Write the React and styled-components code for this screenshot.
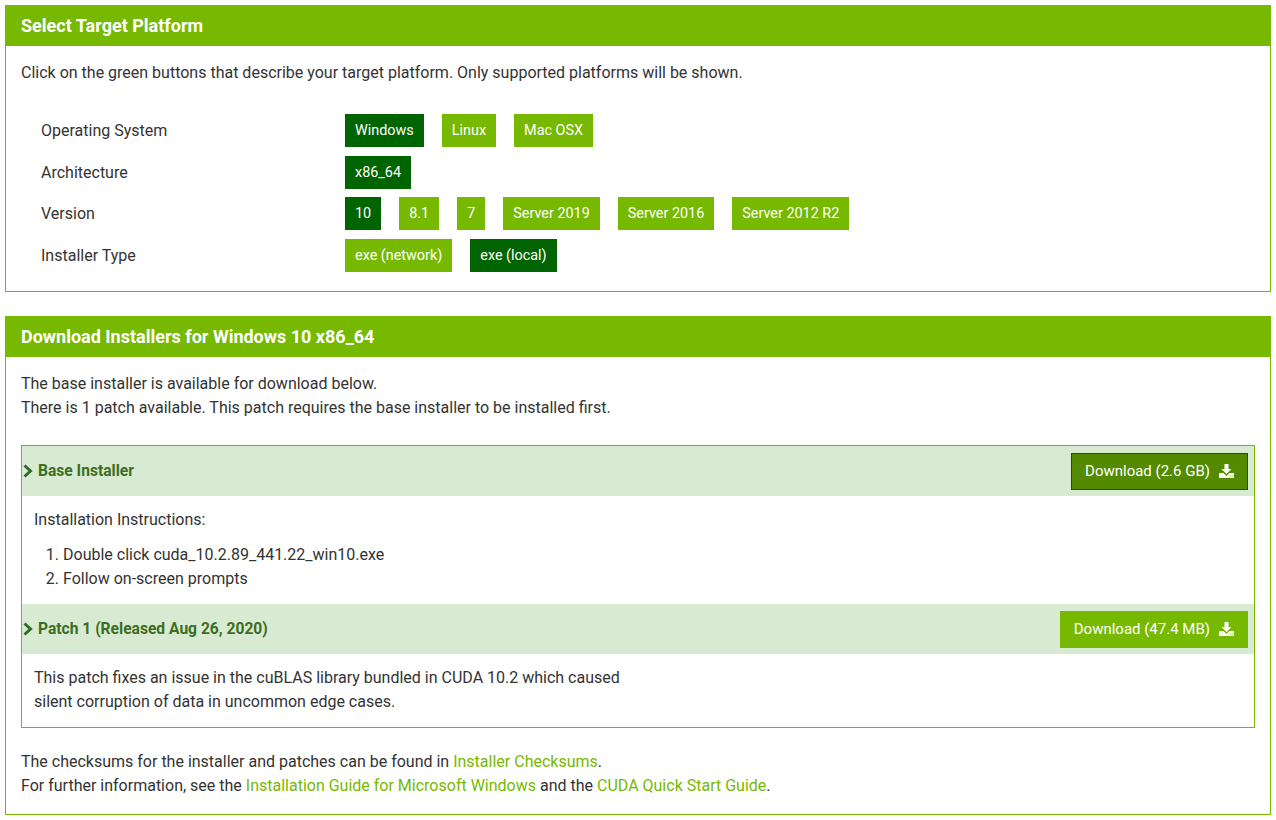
import React from 'react';
import styled, { createGlobalStyle } from 'styled-components';

const GlobalStyle = createGlobalStyle`
  body {
    margin: 0;
    padding: 5px;
    background: #fff;
    font-family: Roboto, "Liberation Sans", sans-serif;
    color: #333;
    font-size: 16px;
  }
`;

const GREEN = '#76b900';
const DARK = '#006400';

const platformRows = [
    {label: 'Operating System', options: ['Windows', 'Linux', 'Mac OSX'], active: 'Windows'},
    {label: 'Architecture', options: ['x86_64'], active: 'x86_64'},
    {label: 'Version', options: ['10', '8.1', '7', 'Server 2019', 'Server 2016', 'Server 2012 R2'], active: '10'},
    {label: 'Installer Type', options: ['exe (network)', 'exe (local)'], active: 'exe (local)'},
];

function DownloadIcon() {
    return (
        <svg width="15" height="14" viewBox="0 0 15 14">
            <path d="M5.5 0h4v5h3l-5 5-5-5h3z" fill="currentColor"/>
            <path d="M0 9h4.5l3 3 3-3H15v5H0z" fill="currentColor"/>
            <rect x="11" y="11.6" width="1" height="1" fill={GREEN}/>
            <rect x="12.8" y="11.6" width="1" height="1" fill={GREEN}/>
        </svg>
    );
}

function Chevron() {
    return (
        <svg width="10" height="14" viewBox="0 0 10 14">
            <path d="M1.5 1.5l6 5.5-6 5.5" fill="none" stroke="currentColor" strokeWidth="3"/>
        </svg>
    );
}

function App() {
    return (
        <Page>
            <GlobalStyle/>
            <Panel>
                <PanelHeader>Select Target Platform</PanelHeader>
                <PanelBody>
                    <Intro>Click on the green buttons that describe your target platform. Only supported platforms will be shown.</Intro>
                    <SelectGrid>
                        {platformRows.map(row => (
                            <React.Fragment key={row.label}>
                                <RowLabel>{row.label}</RowLabel>
                                <Options>
                                    {row.options.map(o => (
                                        <OptionButton key={o} $active={o === row.active}>{o}</OptionButton>
                                    ))}
                                </Options>
                            </React.Fragment>
                        ))}
                    </SelectGrid>
                </PanelBody>
            </Panel>

            <Panel>
                <PanelHeader>Download Installers for Windows 10 x86_64</PanelHeader>
                <PanelBody>
                    <Lines>
                        <div>The base installer is available for download below.</div>
                        <div>There is 1 patch available. This patch requires the base installer to be installed first.</div>
                    </Lines>
                    <InstallerBox>
                        <InstallerHead>
                            <InstallerTitle><Chevron/>Base Installer</InstallerTitle>
                            <DownloadButton $dark>Download (2.6 GB) <DownloadIcon/></DownloadButton>
                        </InstallerHead>
                        <InstallerBody>
                            <div>Installation Instructions:</div>
                            <Steps>
                                <li>Double click cuda_10.2.89_441.22_win10.exe</li>
                                <li>Follow on-screen prompts</li>
                            </Steps>
                        </InstallerBody>
                        <InstallerHead>
                            <InstallerTitle><Chevron/>Patch 1 (Released Aug 26, 2020)</InstallerTitle>
                            <DownloadButton>Download (47.4 MB) <DownloadIcon/></DownloadButton>
                        </InstallerHead>
                        <InstallerBody>
                            <Lines>
                                <div>This patch fixes an issue in the cuBLAS library bundled in CUDA 10.2 which caused</div>
                                <div>silent corruption of data in uncommon edge cases.</div>
                            </Lines>
                        </InstallerBody>
                    </InstallerBox>
                    <Footer>
                        <div>The checksums for the installer and patches can be found in <Link>Installer Checksums</Link>.</div>
                        <div>For further information, see the <Link>Installation Guide for Microsoft Windows</Link> and the <Link>CUDA Quick Start Guide</Link>.</div>
                    </Footer>
                </PanelBody>
            </Panel>
        </Page>
    );
}

const Page = styled.div`
  display: flex;
  flex-direction: column;
  gap: 24px;
  width: 1266px;
`;

const Panel = styled.section`
  border: 1px solid ${GREEN};
`;

const PanelHeader = styled.h2`
  margin: -1px -1px 0;
  background: ${GREEN};
  color: #fff;
  font-size: 18px;
  font-weight: 700;
  height: 41px;
  line-height: 41px;
  padding: 0 16px;
`;

const PanelBody = styled.div`
  padding: 15px 15px 16px;
`;

const Intro = styled.p`
  margin: 0;
  line-height: 24px;
`;

const SelectGrid = styled.div`
  display: grid;
  grid-template-columns: 304px 1fr;
  row-gap: 8.7px;
  margin: 29px 0 3px 20px;
`;

const RowLabel = styled.div`
  display: flex;
  align-items: center;
  height: 33px;
`;

const Options = styled.div`
  display: flex;
  gap: 18px;
`;

const OptionButton = styled.span`
  display: inline-flex;
  align-items: center;
  height: 33px;
  padding: 0 10px;
  font-size: 14.4px;
  color: #fff;
  background: ${p => (p.$active ? DARK : GREEN)};
`;

const Lines = styled.div`
  line-height: 24px;
`;

const InstallerBox = styled.div`
  border: 1px solid ${GREEN};
  margin: 25px 0 0;
`;

const InstallerHead = styled.div`
  display: flex;
  align-items: center;
  justify-content: space-between;
  height: 50px;
  padding: 0 6px 0 1px;
  background: #d9ead3;
`;

const InstallerTitle = styled.div`
  display: flex;
  align-items: center;
  gap: 5px;
  font-size: 15.6px;
  font-weight: 700;
  color: #3b6e22;
  svg {
    color: #2e6b25;
  }
`;

const DownloadButton = styled.span`
  display: inline-flex;
  align-items: center;
  gap: 9px;
  height: 37px;
  box-sizing: border-box;
  padding: 0 13px;
  font-size: 15px;
  color: #fff;
  background: ${p => (p.$dark ? '#538a00' : GREEN)};
  border: 1px solid ${p => (p.$dark ? '#2d4d00' : GREEN)};
  svg {
    color: #fff;
  }
`;

const InstallerBody = styled.div`
  padding: 12px 12px 13px;
  line-height: 24px;
`;

const Steps = styled.ol`
  margin: 11px 0 0;
  padding-left: 29px;
`;

const Footer = styled.div`
  margin-top: 22px;
  line-height: 24px;
`;

const Link = styled.span`
  color: ${GREEN};
`;

export default App;
